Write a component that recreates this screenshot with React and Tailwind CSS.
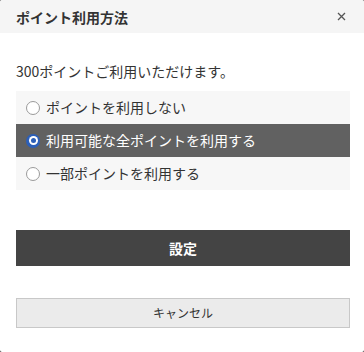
import React, { useState } from 'react';

const options = [
  { id: 'none', label: 'ポイントを利用しない' },
  { id: 'all', label: '利用可能な全ポイントを利用する' },
  { id: 'part', label: '一部ポイントを利用する' },
];

const Radio = ({ checked }) =>
  checked ? (
    <span className="flex h-[14px] w-[14px] shrink-0 items-center justify-center rounded-full bg-[#2c5fb8]">
      <span className="flex h-[9px] w-[9px] items-center justify-center rounded-full bg-white">
        <span className="h-[5px] w-[5px] rounded-full bg-[#2c5fb8]"></span>
      </span>
    </span>
  ) : (
    <span className="h-[14px] w-[14px] shrink-0 rounded-full border-[1.5px] border-[#9a9a9a] bg-white"></span>
  );

const App = () => {
  const [selected, setSelected] = useState('all');

  return (
    <div className="h-[352px] w-[364px] bg-[#333]" style={{ fontFamily: '"Noto Sans CJK JP", "Noto Sans", sans-serif' }}>
      <div className="flex h-full flex-col overflow-hidden rounded-[2px] bg-white text-[#333]">
        {/* ヘッダー */}
        <div className="flex h-[33px] shrink-0 items-center justify-between bg-[#f5f5f5] pl-4 pr-[18px]">
          <h1 className="text-[14px] font-bold leading-none">ポイント利用方法</h1>
          <button className="text-[#555]" aria-label="閉じる">
            <svg width="9" height="9" viewBox="0 0 9 9" stroke="currentColor" strokeWidth="1.3">
              <path d="M1 1L8 8M8 1L1 8" />
            </svg>
          </button>
        </div>

        <div className="flex flex-col px-4">
          <p className="mt-[29px] text-[14px] leading-[18px]">300ポイントご利用いただけます。</p>

          <ul className="mt-[11px] w-[334px]">
            {options.map((opt) => {
              const active = selected === opt.id;
              return (
                <li key={opt.id}>
                  <button
                    onClick={() => setSelected(opt.id)}
                    className={`flex h-[33px] w-full items-center gap-[6px] pl-[10px] text-left text-[14px] ${
                      active ? 'bg-[#616161] text-white' : 'bg-[#f7f7f7] text-[#333]'
                    }`}
                  >
                    <Radio checked={active} />
                    <span>{opt.label}</span>
                  </button>
                </li>
              );
            })}
          </ul>

          <button className="mt-[40px] h-[36px] w-[334px] bg-[#444] text-[14px] font-bold text-white">設定</button>

          <button className="mt-[32px] h-[30px] w-[334px] border border-[#c8c8c8] bg-[#ebebeb] text-[12px] text-[#333]">
            キャンセル
          </button>
        </div>
      </div>
    </div>
  );
};

export default App;
